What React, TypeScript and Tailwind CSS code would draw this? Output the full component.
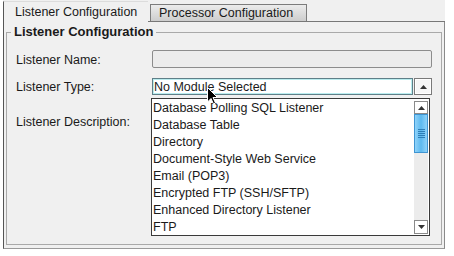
import React from "react";

const items = [
  "Database Polling SQL Listener",
  "Database Table",
  "Directory",
  "Document-Style Web Service",
  "Email (POP3)",
  "Encrypted FTP (SSH/SFTP)",
  "Enhanced Directory Listener",
  "FTP",
];

function UpTri() {
  return (
    <svg width="7" height="4" viewBox="0 0 7 4">
      <path d="M0 4 L3.5 0 L7 4 Z" fill="#333" />
    </svg>
  );
}
function DownTri() {
  return (
    <svg width="7" height="4" viewBox="0 0 7 4">
      <path d="M0 0 L3.5 4 L7 0 Z" fill="#333" />
    </svg>
  );
}

export default function App() {
  return (
    <div className="relative w-[454px] h-[256px] bg-white overflow-hidden font-['Liberation_Sans',Arial,sans-serif] text-[12.5px] text-[#1a1a1a]">
      <div className="ml-[3px] w-[442px] h-[249px] flex flex-col bg-[#f0f0f0]">
        {/* tabs */}
        <div className="flex h-[22px] shrink-0">
          <div className="mt-[1px] w-[145px] border-l border-[#555] border-t border-t-[#dcdcdc] pl-[11px] leading-[20px]">
            Listener Configuration
          </div>
          <div className="flex-1 flex items-end border-b border-[#777]">
            <div className="ml-[2px] w-[157px] h-[17px] border border-b-0 border-[#7c7c7c] bg-gradient-to-b from-[#ececec] to-[#cdcdcd] pl-[8px] leading-[17px]">
              Processor Configuration
            </div>
          </div>
        </div>
        {/* panel */}
        <div className="flex-1 flex flex-col border-l border-r border-b border-l-[#555] border-r-[#8a8a8a] border-b-[#9a9a9a] px-[2px] pt-[2px] pb-[3px]">
          <fieldset className="flex-1 border border-[#a9a9a9] min-w-0">
            <legend className="ml-[4px] px-[3px] font-bold text-[13px] leading-[16px]">
              Listener Configuration
            </legend>
            <div className="grid grid-cols-[145px_1fr] pt-[10px] pr-[9px]">
              <div className="pl-[9px] h-[18px] leading-[20px]">Listener Name:</div>
              <div className="h-[18px] border border-[#8c8c8c] rounded-[2px] bg-[#ececec]" />

              <div className="pl-[9px] mt-[10px] h-[17px] leading-[19px]">Listener Type:</div>
              <div className="relative mt-[10px] h-[17px] flex">
                <div className="flex-1 h-[17px] border border-[#5f7f88] bg-white shadow-[inset_0_0_0_1px_#b9ecee] pl-[1px] leading-[16px]">
                  No Module Selected
                </div>
                <div className="ml-[1px] w-[18px] h-[17px] border border-[#7a7a7a] bg-[#f6f6f6] shadow-[inset_0_0_0_1px_#ffffff] flex items-center justify-center">
                  <UpTri />
                </div>
                {/* dropdown list */}
                <div className="absolute left-[-1px] top-[20px] w-[279px] h-[138px] border border-[#3a3a3a] bg-white flex z-10 overflow-hidden">
                  <div className="flex-1 flex flex-col pt-[1px]">
                    {items.map((it) => (
                      <div key={it} className="h-[17px] shrink-0 leading-[17px] pl-[1px] whitespace-nowrap">
                        {it}
                      </div>
                    ))}
                  </div>
                  <div className="w-[15px] pr-[1px] pt-[2px] pb-[1px] flex flex-col">
                    <div className="h-[13px] border border-[#8a8a8a] bg-white flex items-center justify-center">
                      <UpTri />
                    </div>
                    <div className="h-[39px] border border-[#3f95d2] bg-gradient-to-r from-[#8fd3fa] via-[#5cb9ef] to-[#8fd3fa] flex flex-col items-center justify-center gap-[1px]">
                      <div className="w-[7px] h-px bg-[#2e7fb8]" />
                      <div className="w-[7px] h-px bg-[#2e7fb8]" />
                      <div className="w-[7px] h-px bg-[#2e7fb8]" />
                      <div className="w-[7px] h-px bg-[#2e7fb8]" />
                      <div className="w-[7px] h-px bg-[#2e7fb8]" />
                    </div>
                    <div className="flex-1 bg-[#ececec]" />
                    <div className="h-[14px] border border-[#8a8a8a] bg-white flex items-center justify-center">
                      <DownTri />
                    </div>
                  </div>
                </div>
              </div>

              <div className="pl-[9px] mt-[18px] h-[17px] leading-[19px]">Listener Description:</div>
              <div />
            </div>
          </fieldset>
        </div>
      </div>
      {/* mouse cursor */}
      <svg className="absolute left-[207px] top-[87px] z-20" width="12" height="18" viewBox="0 0 12 18">
        <path d="M0.5 0.5 L0.5 15 L4 11.5 L6.5 17 L8.5 16 L6 10.5 L10.5 10.5 Z" fill="#000" stroke="#fff" strokeWidth="1" />
      </svg>
    </div>
  );
}
